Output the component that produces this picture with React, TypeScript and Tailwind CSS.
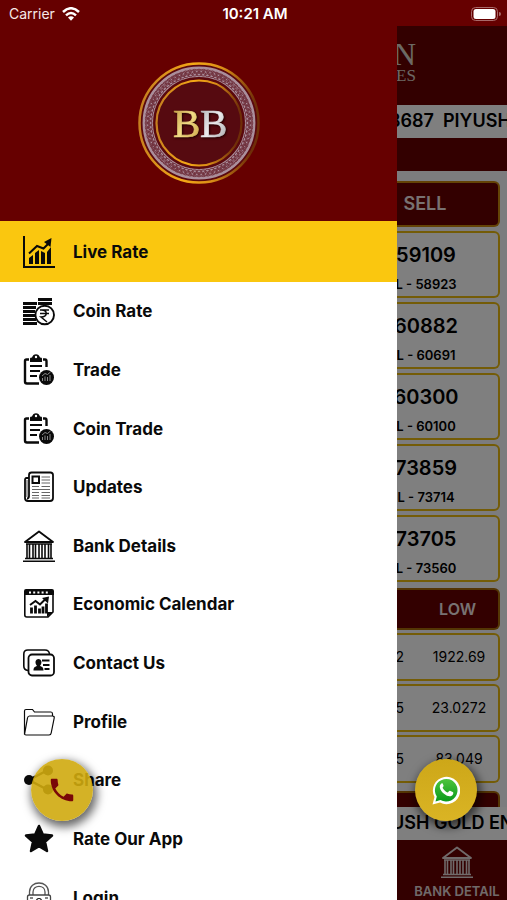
import type { ReactNode } from "react";
import { MdPhone } from "react-icons/md";

type IconProps = { className?: string };

function Svg({ children, className = "size-8" }: { children: ReactNode; className?: string }) {
  return (
    <svg viewBox="0 0 32 32" className={className} fill="none" stroke="currentColor" strokeWidth="1.6" aria-hidden="true">
      {children}
    </svg>
  );
}

function LiveRateIcon() {
  return (
    <Svg>
      <path d="M1 0v31h31" strokeWidth="2" />
      <path d="M6 28v-6l4-3v9zM12 28V17l4-3v14zM18 28V15l4 2v11zM24 28V16l4-5v17z" fill="currentColor" stroke="none" />
      <path d="M6 17.5l8-7.5 6.500 2.500 6-6" strokeWidth="2" />
      <path d="M21 6l7.500-4-1 9z" fill="currentColor" stroke="none" />
    </Svg>
  );
}

function CoinRateIcon() {
  return (
    <Svg>
      <path d="M0 8.500h14M0 12.500h13M0 16.500h12M0 20.500h12M0 24.500h13M0 28.500h14" strokeWidth="3.200" />
      <path d="M15 4.500h14M15 8.500h14" strokeWidth="3.200" />
      <circle cx="21.700" cy="20" r="9.300" fill="#fff" strokeWidth="1.900" />
      <path d="M17 15h9M17 18.500h9M18 15c7-.5 7 7 0 7l6 5" strokeWidth="1.500" />
    </Svg>
  );
}

function TradeIcon() {
  return (
    <Svg>
      <path d="M6 5.500H3.500Q2 5.500 2 7v20.500Q2 29.500 4 29.500h12M20 5.500h2q1.500 0 1.500 2V13" strokeWidth="2.400" />
      <path d="M7 8V4.500Q7 3.500 9 3.500C10-1 16-1 17 3.500q2 0 2 1V8z" fill="currentColor" stroke="none" />
      <circle cx="13" cy="3" r="1.200" fill="#fff" stroke="none" />
      <path d="M7 12h12M7 17h10M7 22h7" strokeWidth="2" />
      <circle cx="23.500" cy="23.500" r="7.500" fill="currentColor" stroke="none" />
      <path d="M19.500 27v-3M22 27v-4.500M24.500 27v-4M27 27v-6M19 22l3-2.500 2.500 1L27.500 18" stroke="#8a8a8a" strokeWidth="1" />
    </Svg>
  );
}

function UpdatesIcon() {
  return (
    <Svg>
      <path d="M6 7H3.500Q2 7 2 9v18q0 3 3 3h22q3 0 3-3V4q0-2.500-2.500-2.500h-19Q6 1.500 6 4v21q0 2.500-2 2.500" strokeWidth="1.800" />
      <path d="M4 9v17" stroke="#888" strokeWidth="1.500" />
      <rect x="9.500" y="5.500" width="6.500" height="6.500" strokeWidth="2" />
      <path d="M18.500 6h8.500M18.500 9h8.500M18.500 12h8.500M9 15.500h7M18.500 15.500h8.500M9 18.500h18M9 21.500h7M18.500 21.500h8.500M9 24.500h7M18.500 24.500h8.500M9 27h7M18.500 27h8.500" strokeWidth="1" stroke="#666" />
    </Svg>
  );
}

function BankIcon({ className }: IconProps) {
  return (
    <Svg className={className}>
      <path d="M2 12L16 1.500 30 12z" strokeWidth="1.900" strokeLinejoin="round" />
      <path d="M3 14h26M2 28.500h28M0 31.200h32" strokeWidth="1.500" />
      <path d="M4 14v14M6.500 14v14M10 14v14M12.500 14v14M16 14v14M19 14v14M22 14v14M25.500 14v14M28 14v14" strokeWidth="1.600" />
    </Svg>
  );
}

function CalendarIcon() {
  return (
    <Svg>
      <path d="M1.800 4v23q0 2 2 2H25l5-5V4" strokeWidth="1.600" />
      <path d="M1 7V3q0-2 2-2h26q2 0 2 2v4zM24 29v-5h6z" fill="currentColor" stroke="none" />
      <path d="M6 4.500h21" stroke="#fff" strokeWidth="1.800" strokeDasharray="2 2.200" />
      <path d="M8.500 25.500v-6M12.500 25.500v-8M16.500 25.500v-5M20 25.500v-7M23.500 25.500v-10" strokeWidth="2.800" />
      <path d="M7 17l5.500-4 4.500 3.500 6-6" strokeWidth="2" />
      <path d="M19 10l7-1.500-1 7z" fill="currentColor" stroke="none" />
    </Svg>
  );
}

function ContactIcon() {
  return (
    <Svg>
      <path d="M5 23.500Q.8 23 .8 19V7q0-4 4-4H22q4 0 4.500 4" strokeWidth="1.600" />
      <rect x="5.500" y="7.500" width="25.500" height="21" rx="3.500" strokeWidth="1.800" />
      <path d="M10.500 23.500c0-3 1-3.500 3.500-4.500-3-4-1-7 1.500-7s4.500 3 1.500 7c2.500 1 3.500 1.500 3.500 4.500z" fill="currentColor" stroke="none" />
      <path d="M19 13.500h7.500M20 18h6.500M21.500 22h5" strokeWidth="1.800" />
    </Svg>
  );
}

function FolderIcon() {
  return (
    <Svg>
      <path d="M1.500 28.500V5q0-1.500 1.500-1.500h6.500l2 2.500H28q1.500 0 1.500 2v2M1.500 28.500L4.500 12q.3-2 2-2h23q2 0 1.700 2l-3 15q-.3 2-2.200 2H3q-1.500 0-1.500-1.500z" strokeWidth="1.200" />
    </Svg>
  );
}

function ShareIcon() {
  return (
    <Svg>
      <path d="M25 6L6 16l19 10" strokeWidth="2.500" />
      <g fill="currentColor" stroke="none">
        <circle cx="6" cy="16" r="5" />
        <circle cx="25" cy="6.500" r="5" />
        <circle cx="25" cy="25.500" r="5" />
      </g>
    </Svg>
  );
}

function StarIcon() {
  return (
    <Svg>
      <path d="M16 3l3.800 8.500 9.200 1-7 6.200 2 9.300-8-4.800L8 28l2-9.300-7-6.200 9.200-1z" fill="currentColor" strokeWidth="2.500" strokeLinejoin="round" />
    </Svg>
  );
}

function LockIcon() {
  return (
    <Svg>
      <path d="M6.500 13v-3C6.500-2 25.500-2 25.500 10v3M10 13v-3c0-7.500 12-7.500 12 0v3" stroke="#555" strokeWidth="1.300" />
      <rect x="4.500" y="13" width="23" height="17" rx="2" strokeWidth="1.300" stroke="#444" />
      <circle cx="16" cy="19" r="2.500" strokeWidth="1.200" />
      <path d="M16 21.500v4M7 16h3M22 16h3" strokeWidth="1.200" />
    </Svg>
  );
}

const ringAngles = Array.from({ length: 72 }, (_, i) => i * 5);

function Logo() {
  return (
    <svg viewBox="0 0 122 122" className="size-[122px]" role="img" aria-label="BB">
      <defs>
        <linearGradient id="ring" x1="0" y1="0" x2="1" y2="0.1">
          <stop offset="0" stopColor="#c07a20" />
          <stop offset="0.45" stopColor="#f5a916" />
          <stop offset="0.7" stopColor="#d98d17" />
          <stop offset="1" stopColor="#6f2e08" />
        </linearGradient>
        <linearGradient id="gold" x1="0" y1="0" x2="1" y2="1">
          <stop offset="0" stopColor="#b78a32" />
          <stop offset="0.5" stopColor="#f2dc86" />
          <stop offset="1" stopColor="#c79c3c" />
        </linearGradient>
        <linearGradient id="silver" x1="0" y1="0" x2="1" y2="1">
          <stop offset="0" stopColor="#a5a5a8" />
          <stop offset="0.5" stopColor="#ececee" />
          <stop offset="1" stopColor="#9d9da0" />
        </linearGradient>
      </defs>
      <circle cx="61" cy="61" r="59.500" fill="#5a080d" stroke="url(#ring)" strokeWidth="2.500" />
      <circle cx="61" cy="61" r="51.200" fill="none" stroke="#aa8e9b" strokeWidth="10.500" />
      <g fill="none" stroke="#70323e" strokeWidth="0.900">
        {ringAngles.map((angle) => (
          <g key={angle} transform={`rotate(${angle} 61 61)`}>
            <ellipse cx="61" cy="12" rx="2.600" ry="1.900" />
            <ellipse cx="61" cy="8.400" rx="1.800" ry="1.200" />
            <ellipse cx="61" cy="9.800" rx="2.600" ry="2.200" transform="rotate(2.5 61 61)" />
          </g>
        ))}
      </g>
      <circle cx="61" cy="61" r="42.500" fill="#560a10" stroke="url(#ring)" strokeWidth="2.200" />
      <g fontFamily="'Liberation Serif', serif" fontSize="41" strokeWidth="0.700" className="drop-shadow-[1px_1px_1px_#200000]">
        <text x="35" y="75" fill="url(#gold)" stroke="url(#gold)">B</text>
        <text x="62" y="75" fill="url(#silver)" stroke="url(#silver)">B</text>
      </g>
    </svg>
  );
}

function StatusBar() {
  return (
    <header className="grid h-[26px] shrink-0 grid-cols-3 items-center bg-[#660000] pt-0.5 pr-1.5 pl-[9px] text-sm leading-5 text-[#f6e8e8]">
      <div className="flex items-center gap-[7px]">
        <span>Carrier</span>
        <svg viewBox="0 0 18 14" className="h-3.5 w-[18px]" fill="none" stroke="#fff" strokeWidth="2.500" aria-hidden="true">
          <path d="M1 5q8-7.500 16 0M4 8.300q5-4.600 10 0" />
          <path d="M6 10.500q3-2.600 6 0l-3 3.200z" fill="#fff" stroke="none" />
        </svg>
      </div>
      <span className="text-center text-[15px] font-semibold text-white">10:21 AM</span>
      <svg viewBox="0 0 30 14" className="h-3.5 w-[30px] justify-self-end" aria-label="Battery full" role="img">
        <rect x="0.500" y="0.500" width="26" height="13" rx="4" fill="none" stroke="#a86a6a" />
        <rect x="2.500" y="2" width="22" height="10" rx="2.500" fill="#fff" />
        <path d="M28 5q2 0 2 2t-2 2z" fill="#a86a6a" />
      </svg>
    </header>
  );
}

const menu = [
  { label: "Coin Rate", Icon: CoinRateIcon },
  { label: "Trade", Icon: TradeIcon },
  { label: "Coin Trade", Icon: TradeIcon },
  { label: "Updates", Icon: UpdatesIcon },
  { label: "Bank Details", Icon: BankIcon },
  { label: "Economic Calendar", Icon: CalendarIcon },
  { label: "Contact Us", Icon: ContactIcon },
  { label: "Profile", Icon: FolderIcon },
  { label: "Share", Icon: ShareIcon },
  { label: "Rate Our App", Icon: StarIcon },
  { label: "Login", Icon: LockIcon },
];

function MenuButton({ label, Icon }: { label: string; Icon: (p: IconProps) => ReactNode }) {
  return (
    <button type="button" className="flex h-full w-full items-center gap-[18px] pl-[23px] text-left text-[17px] leading-6 font-bold text-[#0a0a0a]">
      <Icon />
      {label}
    </button>
  );
}

function Drawer() {
  return (
    <nav className="w-[397px] shrink-0 overflow-hidden bg-white" aria-label="Main menu">
      <div className="flex h-[195px] justify-center bg-[#660000] pt-9">
        <Logo />
      </div>
      <div className="h-[61px] bg-[#fac70f]">
        <MenuButton label="Live Rate" Icon={LiveRateIcon} />
      </div>
      <ul className="grid h-[645px] auto-rows-fr">
        {menu.map((item) => (
          <li key={item.label} className="min-h-0">
            <MenuButton {...item} />
          </li>
        ))}
      </ul>
    </nav>
  );
}

const rates = [
  ["59109", "58923"],
  ["60882", "60691"],
  ["60300", "60100"],
  ["73859", "73714"],
  ["73705", "73560"],
];

const lows = [
  ["2", "1922.69"],
  ["5", "23.0272"],
  ["5", "83.049"],
];

function Page() {
  return (
    <main className="relative flex min-w-0 flex-1 flex-col overflow-hidden bg-[#f8f8fc] whitespace-nowrap">
      <div className="h-[79px] shrink-0 bg-[#660000] pt-3 font-['Liberation_Serif',serif] text-[#d8d2c8]">
        <p className="-ml-1 text-[32px] leading-8">N</p>
        <p className="-ml-px text-[17px] leading-3">ES</p>
      </div>
      <div className="h-[33px] shrink-0 bg-white">
        <p className="-ml-2 text-lg leading-8 font-semibold whitespace-pre">8687  PIYUSH</p>
      </div>
      <div className="h-[33px] shrink-0 bg-[#660000]" />
      <div className="flex min-h-0 flex-1 flex-col gap-1 overflow-hidden pt-2.5 pr-[7px]">
        <div className="flex h-[46px] shrink-0 items-center rounded-r-md border-2 border-l-0 border-[#c8860c] bg-[#660000] text-lg font-semibold text-[#f0e4e4]">
          <span className="flex w-14 justify-center">SELL</span>
        </div>
        <div className="grid h-[351px] shrink-0 auto-rows-fr gap-1">
          {rates.map(([sell, low]) => (
            <div key={sell} className="flex flex-col rounded-r-md border-2 border-l-0 border-[#e8b90f] bg-white pt-2">
              <span className="flex w-[58px] justify-center text-xl leading-7 font-semibold">{sell}</span>
              <span className="flex w-[58px] justify-center pt-[5px] text-[13px] leading-5 font-semibold">L - {low}</span>
            </div>
          ))}
        </div>
        <div className="mt-0.5 flex h-[42px] shrink-0 items-center justify-end rounded-r-md border-2 border-l-0 border-[#a86a08] bg-[#660000] pr-[22px] text-base font-semibold text-[#f0e4e4]">
          LOW
        </div>
        <div className="-mt-px grid h-[150px] shrink-0 auto-rows-fr gap-[3px]">
          {lows.map(([high, low]) => (
            <div key={low} className="flex items-center rounded-r-md border-2 border-l-0 border-[#e8b90f] bg-white text-sm">
              <span className="flex w-[7px] justify-end">{high}</span>
              <span className="flex-1 pl-4 text-center">{low}</span>
            </div>
          ))}
        </div>
        <div className="mt-1 h-[42px] shrink-0 rounded-r-md border-2 border-l-0 border-[#a86a08] bg-[#660000]" />
      </div>
      <div className="h-[33px] shrink-0 bg-white">
        <p className="-ml-1.5 text-lg leading-8 font-semibold">USH GOLD EN</p>
      </div>
      <a href="#bank" className="flex h-[60px] shrink-0 flex-col items-center gap-[3px] bg-[#660000] pt-1.5 pl-2.5 text-[13px] leading-5 font-semibold text-[#e0d4d4]">
        <BankIcon className="size-8 shrink-0" />
        BANK DETAIL
      </a>
      <div className="absolute inset-0 bg-black/50" />
    </main>
  );
}

function WhatsAppIcon() {
  return (
    <svg viewBox="0 0 28 29" className="h-[29px] w-7" aria-hidden="true">
      <defs>
        <linearGradient id="wa" x1="0" y1="0" x2="0" y2="1">
          <stop offset="0" stopColor="#4fc43d" />
          <stop offset="1" stopColor="#0a9a1c" />
        </linearGradient>
      </defs>
      <path d="M.5 28.500l2-7.500A13.700 13.700 0 1 1 8 26.500z" fill="#fff" />
      <path d="M3.500 25.500l1.300-5A11.300 11.300 0 1 1 8.500 24z" fill="url(#wa)" />
      <path d="M9.800 7.300c-3.600 2-2 7 2.200 10.500 3.800 3.200 7.600 3.300 9 .5.500-1 .4-1.800-.3-2.200l-2.700-1.300c-1-.4-1.500 1.700-2.500 1.600-2-.7-4-2.700-4.800-4.400-.2-.8 1.200-1.400.8-2.400L10.700 7.500q-.4-.5-.9-.2z" fill="#fff" />
    </svg>
  );
}

export default function App() {
  return (
    <div className="relative flex h-screen flex-col overflow-hidden font-[Inter,sans-serif] text-black">
      <StatusBar />
      <div className="flex min-h-0 flex-1">
        <Drawer />
        <Page />
      </div>
      <a
        href="#call"
        aria-label="Call"
        className="absolute bottom-[79px] left-[31px] flex size-[62px] items-center justify-center rounded-full bg-[#cfaa0e]/90 shadow-[2px_4px_10px_2px_rgba(0,0,0,0.6)]"
      >
        <MdPhone className="size-[30px] text-[#7a0808]" />
      </a>
      <a
        href="#whatsapp"
        aria-label="WhatsApp"
        className="absolute right-[30px] bottom-[79px] flex size-[62px] items-center justify-center rounded-full bg-linear-to-b from-[#cda718] to-[#dab424] shadow-[2px_4px_10px_2px_rgba(0,0,0,0.6)]"
      >
        <WhatsAppIcon />
      </a>
    </div>
  );
}
